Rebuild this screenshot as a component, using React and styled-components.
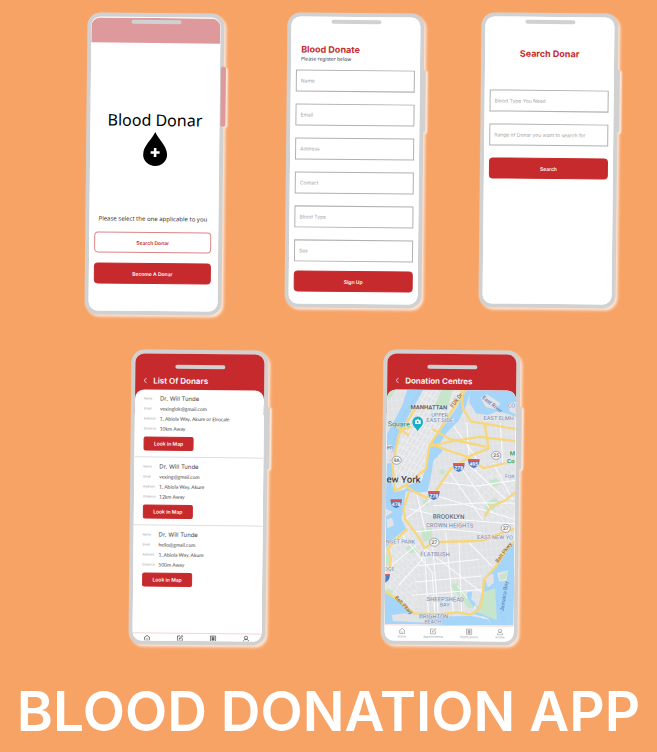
import React from "react";
import styled, { createGlobalStyle, css } from "styled-components";

const RED = "#c62a2c";
const SANS = '"Inter", "Liberation Sans", sans-serif';

const GlobalStyle = createGlobalStyle`
  * { box-sizing: border-box; }
  body { margin: 0; background: #f7a366; font-family: ${SANS}; }
  h1, h2, h3, p, dl, dd, ul { margin: 0; padding: 0; }
  button, input { font-family: inherit; }
`;

const Page = styled.main`
  min-height: 100vh;
  padding: 13px 0 0;
  overflow: hidden;
`;

const TopRow = styled.section`
  display: grid;
  grid-template-columns: 200fr 194fr 137fr;
  align-items: start;
  padding: 0 40px 0 86px;
`;

const BottomRow = styled.section`
  display: grid;
  grid-template-columns: 252fr 275fr;
  align-items: start;
  padding: 35px 0 0 130px;
`;

const Banner = styled.h1`
  margin-top: 34px;
  color: #fff;
  font-size: 55px;
  line-height: 64px;
  font-weight: 600;
  white-space: nowrap;
  text-align: center;
`;

const Device = styled.article`
  position: relative;
  width: 100%;
  max-width: 137px;
  min-height: ${(p) => (p.$tall ? 302 : 295)}px;
  display: flex;
  padding: ${(p) => (p.$tall ? 1 : 0)}px 0 0;
  border: 4px solid #d1d1d1;
  border-radius: 13px;
  background: #fff;
  box-shadow: 2px 2px 3px rgba(255, 255, 255, 0.75);
  transform: rotate(0.6deg);
`;

const Speaker = styled.span`
  position: absolute;
  z-index: 2;
  top: ${(p) => p.$top}px;
  left: 40px;
  width: 50px;
  height: 4px;
  border-radius: 2px;
  background: #d1d1d1;
`;

const SideKey = styled.span`
  position: absolute;
  top: ${(p) => (p.$tinted ? 49 : 52)}px;
  right: -6px;
  width: ${(p) => (p.$tinted ? 5 : 4)}px;
  height: ${(p) => (p.$tinted ? 60 : 63)}px;
  border-radius: 2px;
  background: ${(p) => (p.$tinted ? "#dd999b" : "#d1d1d1")};
  box-shadow: 2px 1px 2px rgba(255, 255, 255, 0.7);
`;

const Screen = styled.div`
  flex: 1;
  min-width: 0;
  display: flex;
  flex-direction: column;
  overflow: hidden;
  border-radius: 9px;
  background: ${(p) => (p.$red ? `linear-gradient(${RED} 60px, #fff 60px)` : "#fff")};
`;

const StatusStrip = styled.div`
  height: 25px;
  background: #dd999b;
`;

const Splash = styled.div`
  display: flex;
  flex-direction: column;
  align-items: center;
  padding-top: 66px;
`;

const Logo = styled.h2`
  font-family: "Noto Sans", sans-serif;
  font-size: 16px;
  line-height: 22px;
  font-weight: 400;
  color: #000;
  white-space: nowrap;
`;

const Drop = styled.svg`
  width: 24px;
  height: 34px;
  margin-top: 1px;
`;

const Choices = styled.div`
  display: flex;
  flex-direction: column;
  gap: 10px;
  padding: 48px 7px 0 5px;
`;

const Prompt = styled.p`
  margin-bottom: -2px;
  font-family: "Noto Sans", sans-serif;
  font-size: 6px;
  line-height: 10px;
  color: #333;
  text-align: center;
  white-space: nowrap;
`;

const Button = styled.button`
  width: 100%;
  height: 21px;
  padding: 0;
  border: 1px solid ${RED};
  border-radius: 4px;
  background: ${RED};
  color: #fff;
  font-size: 5px;
  line-height: 8px;
  font-weight: 600;
  text-align: center;
  ${(p) =>
    p.$outline &&
    css`
      border-color: #dc8586;
      background: #fff;
      color: ${RED};
    `}
`;

const Form = styled.form`
  display: flex;
  flex-direction: column;
  gap: 12px;
  padding: ${(p) => p.$top}px 5px 0;
`;

const FormHead = styled.header`
  padding: 0 5px;
  margin-bottom: ${(p) => (p.$roomy ? 18 : -5)}px;
`;

const FormButton = styled(Button)`
  margin-top: ${(p) => (p.$close ? -3 : 0)}px;
`;

const Title = styled.h2`
  color: ${RED};
  font-size: 9px;
  line-height: 12px;
  font-weight: 700;
  white-space: nowrap;
  text-align: ${(p) => (p.$center ? "center" : "left")};
`;

const Note = styled.p`
  font-family: "Noto Sans", sans-serif;
  font-size: 5px;
  line-height: 7px;
  color: #333;
`;

const Field = styled.input`
  width: 100%;
  height: 22px;
  padding: 0 4px;
  border: 1px solid #b0b0b0;
  border-radius: 0;
  background: #fff;
  color: #444;
  font-size: 5px;
  &::placeholder { color: #a2a2a2; opacity: 1; }
`;

const AppBar = styled.header`
  display: flex;
  align-items: center;
  gap: 6px;
  height: 36px;
  padding: 17px 8px 0;
`;

const Back = styled.button`
  display: flex;
  padding: 0;
  border: 0;
  background: none;
  color: #fff;
  svg { width: 4px; height: 6px; }
`;

const BarTitle = styled.h2`
  color: #fff;
  font-size: 8px;
  line-height: 10px;
  font-weight: 600;
  white-space: nowrap;
`;

const Sheet = styled.div`
  flex: 1;
  display: flex;
  flex-direction: column;
  overflow: hidden;
  border-radius: 9px 9px 0 0;
  background: #fff;
`;

const DonorCard = styled.section`
  padding: 4px 9px 6px;
  border-bottom: ${(p) => (p.$last ? "0" : "1px solid #dedede")};
`;

const Facts = styled.dl`
  display: grid;
  grid-template-columns: 16px 1fr;
  align-items: center;
  margin-bottom: 3px;
`;

const Label = styled.dt`
  font-size: 3px;
  line-height: 10px;
  color: #999;
`;

const Value = styled.dd`
  font-family: ${(p) => (p.$name ? SANS : '"Lato", sans-serif')};
  font-size: ${(p) => (p.$name ? 6 : 5)}px;
  line-height: 10px;
  color: #444;
  white-space: nowrap;
`;

const MapButton = styled(Button)`
  width: 50px;
  height: 14px;
  display: block;
  border-radius: 2px;
`;

const Nav = styled.nav`
  display: flex;
  justify-content: space-between;
  height: ${(p) => (p.$labels ? 16 : 8)}px;
  margin-top: auto;
  padding: ${(p) => (p.$labels ? "2px 9px 0 13px" : "1px 12px 0 11px")};
  border-top: 1px solid #f6d5d5;
  background: #fff;
`;

const NavLink = styled.a`
  display: flex;
  flex-direction: column;
  align-items: center;
  color: ${(p) => (p.$soft ? "#999" : "#444")};
  font-size: 3px;
  line-height: 5px;
  text-decoration: none;
  svg { width: 7px; height: 7px; flex: none; }
`;

const MapArt = styled.svg`
  display: block;
  flex: 1;
  width: 100%;
  min-height: 0;
  font-family: "Roboto", sans-serif;
`;

const glyphs = {
  Home: <path d="M2 11 12 3l10 8M4 10v11h16V10M9 15q3 3 6 0" />,
  Appointments: <path d="M12 4H3v17h17v-9M9 15l1-4 9-9 3 3-9 9-4 1" />,
  Notifications: <path d="M3 3h18v18H3zM8 7h8M8 11h8M8 15h8M9 7v10h6V7" />,
  Profile: <path d="M12 2a5 5 0 0 1 0 11 5 5 0 0 1 0-11M3 22v-4l4-4h10l4 4v4H3" />,
};

function TabBar({ labels }) {
  return (
    <Nav $labels={labels} aria-label="Main">
      {Object.entries(glyphs).map(([name, glyph]) => (
        <NavLink key={name} href="#" $soft={labels} aria-label={name}>
          <svg viewBox="0 0 24 24" fill="none" stroke="currentColor" strokeWidth="2.4">{glyph}</svg>
          {labels && name}
        </NavLink>
      ))}
    </Nav>
  );
}

function Phone({ children, tall, red, tinted }) {
  return (
    <Device $tall={tall}>
      <SideKey $tinted={tinted} />
      <Speaker $top={red ? 11 : 3} />
      <Screen $red={red}>{children}</Screen>
    </Device>
  );
}

function Bar({ children }) {
  return (
    <AppBar>
      <Back type="button" aria-label="Back">
        <svg viewBox="0 0 4 6" fill="none" stroke="currentColor" strokeWidth="0.8"><path d="M3.4 0.5 0.8 3l2.6 2.5" /></svg>
      </Back>
      <BarTitle>{children}</BarTitle>
    </AppBar>
  );
}

const donors = [
  { email: "vexinglok@gmail.com", address: "1, Abiola Way, Akure or Elrocale", distance: "10km Away" },
  { email: "vexing@gmail.com", address: "1, Abiola Way, Akure", distance: "12km Away" },
  { email: "hello@gmail.com", address: "1, Abiola Way, Akure", distance: "500m Away" },
];

function Donor({ donor, last }) {
  return (
    <DonorCard $last={last}>
      <Facts>
        <Label>Name</Label><Value $name>Dr. Will Tunde</Value>
        <Label>Email</Label><Value>{donor.email}</Value>
        <Label>Address</Label><Value>{donor.address}</Value>
        <Label>Distance</Label><Value>{donor.distance}</Value>
      </Facts>
      <MapButton type="button">Look in Map</MapButton>
    </DonorCard>
  );
}

const water = [
  "M70 12H118L100 45 75 90 50 140 30 205 30 245 28 300 38 320 68 312 62 370 56 400 70 430 40 455 8 490V395L30 380 8 370V150L35 100 55 60Z",
  "M240 12 222 60 188 110 150 160 138 190 130 240 116 285 72 300 66 316 100 322 134 318 146 260 150 225 178 195 165 180 190 140 225 104 246 60 262 12Z",
  "M260 12H400V92L378 84 342 74 312 86 278 82 256 48Z",
  "M8 618 45 640 90 685 118 694 270 690 320 700 330 718H8Z",
  "M400 458 384 482 342 542 312 572 302 612 292 655 274 684 320 696 330 718H400Z",
  "M255 620 272 616 268 640 282 652 276 664 258 640Z",
];
const land = [
  "M290 34 310 24 350 50 338 70 306 62Z",
  "M372 52 400 44V84L380 76Z",
  "M8 180 24 178 34 232 8 236Z",
  "M12 402 28 398 34 420 14 430Z",
  "M30 690 70 684 140 694 136 712 34 708Z",
  "M308 574 334 562 336 590 318 604Z",
  "M345 560 378 552 374 584 352 586Z",
];
const parks = [
  "M172 12H206L190 74 152 60Z",
  "M118 430 148 422 150 462 122 470Z",
  "M68 488 90 478 106 500 84 504Z",
  "M120 344 134 340 136 358 122 360Z",
  "M308 350 340 334 350 352 308 392Z",
  "M318 284 340 276 356 292 332 302Z",
  "M204 598 224 592 288 664 262 668Z",
  "M302 618 340 606 346 702 286 678Z",
  "M352 568 376 556 372 576 356 582Z",
  "M10 500 22 512 18 544 10 540Z",
  "M14 612 34 616 30 634 10 622Z",
  "M172 250 186 254 180 268 170 262Z",
  "M12 14 34 14 22 34 12 44Z",
];
const coastParks = parks.slice(7, 9);
const highways = [
  "M96 68 46 148 28 240 36 318 66 300 128 250 138 180 200 82 246 12",
  "M28 116 76 150M58 132 84 124",
  "M232 12 238 68 262 106 304 112 400 128M304 114 316 186 250 214",
  "M140 172 182 190 252 212 302 246 400 222",
  "M140 182 204 166 290 152 400 164",
  "M146 130 200 160 310 182",
  "M256 214 202 250 176 290 152 326 130 336 96 320 68 302",
  "M78 320 62 370 68 402 112 460 126 488 156 470 300 464 368 436 400 426",
  "M74 430 16 490 26 520 20 562",
  "M8 618 50 645 98 684 180 686 226 680 268 686 292 670 302 640 306 580 342 540 380 480 400 462",
  "M306 392 326 360 368 342 400 316",
];
const avenues =
  "M160 330 400 400M150 360 300 350 400 350M80 370 210 400 400 412M90 440 190 430 300 440M150 470 170 685M190 440 215 680M230 470 240 680M126 488 140 684M126 488 300 620M60 450 150 560 160 684M110 540 290 520M100 590 300 570M90 630 300 610M260 470 330 540M200 260 300 400M230 240 330 380M260 240 370 340M330 230 390 340M180 290 280 300 400 280M100 320 130 440M70 400 160 330M210 120 290 230M250 110 260 240M350 110 360 240M30 540 100 480M50 600 130 510M226 600 310 700";

const labels = [
  ["MANHATTAN", 80, 71, 18, "#5c6068", 700],
  ["UPPER", 143, 93, 16, "#8797b5", 500],
  ["EAST SIDE", 128, 109, 17, "#8797b5", 500],
  ["EAST ELMH", 300, 101, 17, "#8797b5", 500],
  ["CO", 372, 63, 17, "#8797b5", 500],
  ["Square", 12, 123, 21, "#22999a", 500],
  ["en", 9, 192, 18, "#7b8087", 500],
  ["ew York", 10, 292, 29, "#3c4046", 500],
  ["M", 380, 207, 18, "#3c9a59", 700],
  ["Co", 372, 230, 18, "#3c9a59", 700],
  ["FOR", 366, 275, 15, "#8797b5", 500],
  ["BROOKLYN", 150, 399, 19, "#6c7684", 700],
  ["CROWN HEIGHTS", 130, 425, 18, "#8797b5", 500],
  ["EAST NEW YO", 284, 459, 17, "#8797b5", 500],
  ["NSET PARK", 10, 475, 17, "#8797b5", 500],
  ["FLATBUSH", 114, 512, 18, "#8797b5", 500],
  ["DGE", 8, 557, 15, "#8797b5", 500],
  ["SHEEPSHEAD", 134, 647, 18, "#8797b5", 500],
  ["BAY", 174, 663, 16, "#8797b5", 500],
  ["BRIGHTON", 112, 699, 18, "#8797b5", 500],
  ["BEACH", 128, 714, 16, "#8797b5", 500],
];
const slanted = [
  ["FDR Dr", 208, 66, -55, "#97704a"],
  ["East River", 294, 36, 38, "#5f87b8"],
  ["Belt Pkwy", 38, 638, 46, "#97704a"],
  ["Belt Pkwy", 348, 530, -54, "#97704a"],
  ["Jamaica Bay", 366, 676, -82, "#5f87b8"],
];
const interstates = [["278", 227, 244], ["495", 272, 232], ["278", 153, 329], ["478", 40, 355], ["", 6, 580]];
const routes = [["9A", 40, 225], ["25", 339, 207], ["27", 370, 426], ["27", 156, 470]];

function CityMap() {
  return (
    <MapArt viewBox="7 12 392 706" preserveAspectRatio="xMidYMid slice" role="img" aria-label="Map of New York">
      <defs>
        <pattern id="uptown" width="12" height="22" patternUnits="userSpaceOnUse" patternTransform="rotate(30)">
          <path d="M0 0H12M0 0V22" stroke="#f7f8f9" strokeWidth="3" />
        </pattern>
        <pattern id="borough" width="15" height="24" patternUnits="userSpaceOnUse" patternTransform="rotate(-8)">
          <path d="M0 0H15M0 0V24" stroke="#eff0f2" strokeWidth="2" />
        </pattern>
        <pattern id="shore" width="22" height="14" patternUnits="userSpaceOnUse" patternTransform="rotate(42)">
          <path d="M0 0H22M0 0V14" stroke="#f3f4f5" strokeWidth="2" />
        </pattern>
      </defs>
      <rect x="7" y="12" width="392" height="706" fill="#e1e2e5" />
      <rect x="7" y="12" width="392" height="706" fill="url(#borough)" />
      <path d="M118 12H240L188 110 138 190 116 285 60 310 28 300 30 205Z" fill="url(#uptown)" />
      <path d="M70 430 126 488 100 684 8 618V490ZM240 230 400 230V420L300 400Z" fill="url(#shore)" />
      {parks.map((d) => <path key={d} d={d} fill="#c6e5cb" />)}
      <path d={avenues} fill="none" stroke="#fbfbfc" strokeWidth="3" />
      {water.map((d) => <path key={d} d={d} fill="#a6d5fa" />)}
      {land.map((d) => <path key={d} d={d} fill="#e1e3e6" />)}
      {coastParks.map((d) => <path key={d} d={d} fill="#c6e5cb" />)}
      <path d="M104 20 42 120 14 250M345 640 372 715" fill="none" stroke="#8eb6dc" strokeWidth="1" strokeDasharray="8 5" />
      {highways.map((d) => <path key={d} d={d} fill="none" stroke="#f6d77e" strokeWidth="7" strokeLinejoin="round" />)}
      {labels.map(([t, x, y, size, fill, weight]) => (
        <text key={t} x={x} y={y} fontSize={size} fill={fill} fontWeight={weight} stroke="#f2f4f6" strokeWidth="2" paintOrder="stroke">{t}</text>
      ))}
      {slanted.map(([t, x, y, a, fill]) => (
        <text key={`${t}${x}`} transform={`translate(${x} ${y}) rotate(${a})`} fontSize="16" fontWeight="500" fill={fill}>{t}</text>
      ))}
      {routes.map(([t, x, y]) => (
        <g key={`${t}${x}`}>
          <ellipse cx={x} cy={y} rx="14" ry="12" fill="#f6f6f6" stroke="#8a8d91" strokeWidth="2" />
          <text x={x} y={y + 5} fontSize="15" fontWeight="500" fill="#666" textAnchor="middle">{t}</text>
        </g>
      ))}
      {interstates.map(([t, x, y]) => (
        <g key={`${t}${x}${y}`}>
          <path d={`M${x - 17} ${y - 13}h34q4 20-17 28q-21-8-17-28Z`} fill="#4c7cc4" stroke="#fff" strokeWidth="1" />
          <path d={`M${x - 17} ${y - 13}h34v6h-34Z`} fill="#d9595a" />
          <text x={x} y={y + 7} fontSize="15" fontWeight="700" fill="#fff" textAnchor="middle">{t}</text>
        </g>
      ))}
      <path d="M102 138C98 126 86 122 86 109a16 16 0 0 1 32 0c0 13-12 17-16 29Z" fill="#18b0c4" />
      <path d="M94 104h4l2-3h5l2 3h4v11H94Z" fill="#fff" />
      <circle cx="102" cy="109" r="3" fill="#18b0c4" />
    </MapArt>
  );
}

export default function App() {
  return (
    <Page>
      <GlobalStyle />
      <TopRow>
        <Phone tall tinted>
          <StatusStrip />
          <Splash>
            <Logo>Blood Donar</Logo>
            <Drop viewBox="0 0 24 34" aria-hidden="true">
              <path d="M12 0C9 7 0 14 0 22.500a12 11.500 0 0 0 24 0C24 14 15 7 12 0Z" />
              <path d="M12 16v9M7.500 20.500h9" stroke="#fff" strokeWidth="2.600" />
            </Drop>
          </Splash>
          <Choices>
            <Prompt>Please select the one applicable to you</Prompt>
            <Button type="button" $outline>Search Donar</Button>
            <Button type="button">Become A Donar</Button>
          </Choices>
        </Phone>
        <Phone>
          <Form $top={27}>
            <FormHead>
              <Title>Blood Donate</Title>
              <Note>Please register below</Note>
            </FormHead>
            {["Name", "Email", "Address", "Contact", "Blood Type", "Sex"].map((name) => (
              <Field key={name} placeholder={name} aria-label={name} />
            ))}
            <FormButton type="button" $close>Sign Up</FormButton>
          </Form>
        </Phone>
        <Phone>
          <Form $top={31}>
            <FormHead $roomy>
              <Title $center>Search Donar</Title>
            </FormHead>
            <Field placeholder="Blood Type You Need" aria-label="Blood type" />
            <Field placeholder="Range of Donar you want to search for" aria-label="Range" />
            <FormButton type="button">Search</FormButton>
          </Form>
        </Phone>
      </TopRow>
      <BottomRow>
        <Phone red>
          <Bar>List Of Donars</Bar>
          <Sheet>
            {donors.map((d, i) => (
              <Donor key={d.email} donor={d} last={i === donors.length - 1} />
            ))}
            <TabBar />
          </Sheet>
        </Phone>
        <Phone red>
          <Bar>Donation Centres</Bar>
          <Sheet>
            <CityMap />
            <TabBar labels />
          </Sheet>
        </Phone>
      </BottomRow>
      <Banner>BLOOD DONATION APP</Banner>
    </Page>
  );
}
